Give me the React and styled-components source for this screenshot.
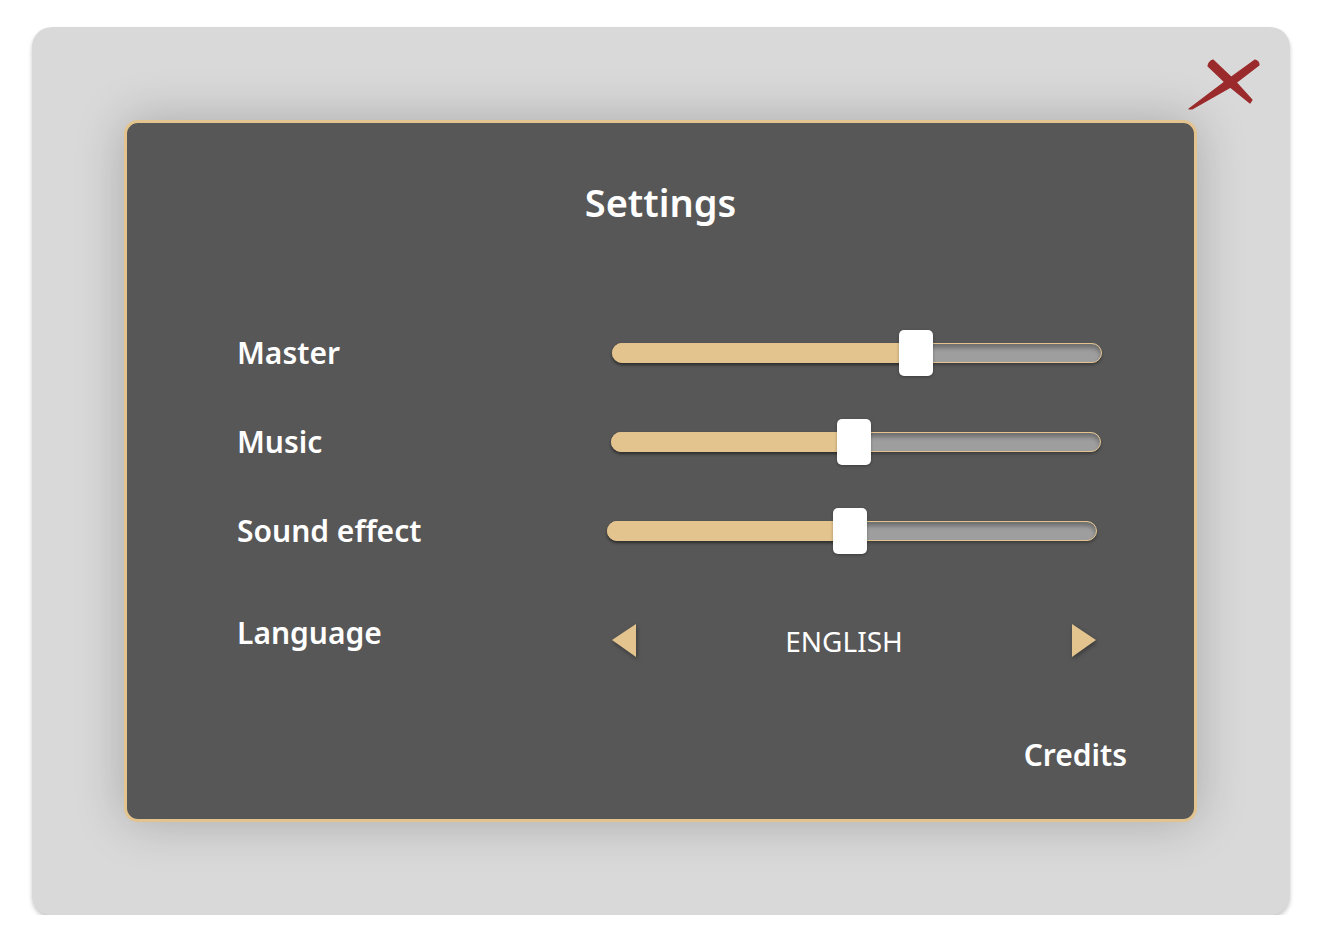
import React, { useState } from "react";
import styled, { createGlobalStyle } from "styled-components";

const Global = createGlobalStyle`
  body {
    margin: 0;
    background: #ffffff;
    font-family: "Noto Sans", "Open Sans", sans-serif;
  }
`;

const Frame = styled.div`
  position: relative;
  box-sizing: border-box;
  width: 1258px;
  height: 888px;
  margin: 27px auto 0;
  background: #d9d9d9;
  border-radius: 20px;
  box-shadow: 0 3px 4px rgba(0, 0, 0, 0.22);
  display: flex;
  align-items: center;
  justify-content: center;
`;

const Close = styled.button`
  position: absolute;
  top: 30px;
  right: 28px;
  width: 76px;
  height: 56px;
  padding: 0;
  border: none;
  background: none;
  cursor: pointer;
  svg {
    display: block;
  }
`;

const Panel = styled.div`
  box-sizing: border-box;
  width: 1073px;
  height: 702px;
  padding: 56px 67px 0;
  background: #575757;
  border: 3px solid #e3c48e;
  border-radius: 14px;
  box-shadow: 0 0 50px rgba(0, 0, 0, 0.22);
  display: flex;
  flex-direction: column;
  color: #ffffff;
`;

const Title = styled.h1`
  margin: 0;
  font-size: 38px;
  line-height: 46px;
  font-weight: 600;
  text-align: center;
`;

const Rows = styled.div`
  margin-top: 81px;
  display: flex;
  flex-direction: column;
`;

const Row = styled.div`
  display: grid;
  grid-template-columns: 370px 1fr;
  align-items: center;
  height: 89px;
  padding-left: 43px;
  margin-top: ${(p) => p.$gap || 0}px;
`;

const Label = styled.div`
  margin-top: 4px;
  font-size: 30px;
  font-weight: 600;
  line-height: 42px;
`;

const SliderBox = styled.div`
  position: relative;
  width: 490px;
  height: 20px;
  margin-top: 4px;
  margin-left: ${(p) => p.$shift}px;
  cursor: pointer;
`;

const Track = styled.div`
  box-sizing: border-box;
  height: 100%;
  border: 1px solid #e3c48e;
  border-radius: 10px;
  background: #9e9e9e;
  box-shadow: inset 0 4px 4px rgba(0, 0, 0, 0.3), 0 2px 3px rgba(0, 0, 0, 0.3);
`;

const Fill = styled.div`
  position: absolute;
  left: 0;
  top: 0;
  bottom: 0;
  background: #e3c48e;
  border-radius: 10px 0 0 10px;
  box-shadow: 0 2px 3px rgba(0, 0, 0, 0.25);
`;

const Thumb = styled.div`
  position: absolute;
  top: -13px;
  width: 34px;
  height: 46px;
  margin-left: -17px;
  background: #ffffff;
  border-radius: 5px;
  box-shadow: 0 1px 3px rgba(0, 0, 0, 0.3);
`;

const Selector = styled.div`
  display: flex;
  align-items: center;
  width: 486px;
  margin-left: 4px;
  padding-top: 20px;
`;

const Arrow = styled.button`
  width: 26px;
  height: 36px;
  padding: 0;
  border: none;
  background: none;
  cursor: pointer;
  svg {
    display: block;
    filter: drop-shadow(1px 2px 2px rgba(0, 0, 0, 0.35));
  }
`;

const Value = styled.div`
  flex: 1;
  padding-right: 20px;
  text-align: center;
  font-size: 28px;
  font-weight: 400;
  line-height: 40px;
`;

const Credits = styled.div`
  align-self: flex-end;
  margin-top: 59px;
  font-size: 30px;
  font-weight: 600;
  line-height: 42px;
`;

function Slider({ value, shift }) {
  return (
    <SliderBox $shift={shift}>
      <Track />
      <Fill style={{ width: `${value}%` }} />
      <Thumb style={{ left: `${value}%` }} />
    </SliderBox>
  );
}

const languages = ["ENGLISH", "FRANÇAIS", "DEUTSCH", "ESPAÑOL"];

export default function App() {
  const [lang, setLang] = useState(0);
  const step = (d) => setLang((l) => (l + d + languages.length) % languages.length);

  return (
    <>
      <Global />
      <Frame>
        <Close aria-label="Close">
          <svg width="76" height="56" viewBox="0 0 76 56">
            <g fill="#9a2a2b" stroke="#9a2a2b" strokeWidth="1.2" strokeLinejoin="round">
              <path d="M3 52 L40 24 L69 3 Q73 4 73 8 L43 31 L6 52 Z" />
              <path d="M27 3 L47 22 L66 43 L64 46 L43 29 L22 9 Q23 4 27 3 Z" />
            </g>
          </svg>
        </Close>
        <Panel>
          <Title>Settings</Title>
          <Rows>
            <Row>
              <Label>Master</Label>
              <Slider value={62} shift={5} />
            </Row>
            <Row>
              <Label>Music</Label>
              <Slider value={49.6} shift={4} />
            </Row>
            <Row>
              <Label>Sound effect</Label>
              <Slider value={49.6} shift={0} />
            </Row>
            <Row $gap={13}>
              <Label>Language</Label>
              <Selector>
                <Arrow aria-label="Previous" onClick={() => step(-1)}>
                  <svg width="26" height="36" viewBox="0 0 26 36">
                    <polygon points="25,1 1,17 25,34" fill="#e3c48e" />
                  </svg>
                </Arrow>
                <Value>{languages[lang]}</Value>
                <Arrow aria-label="Next" onClick={() => step(1)}>
                  <svg width="26" height="36" viewBox="0 0 26 36">
                    <polygon points="1,1 25,17 1,34" fill="#e3c48e" />
                  </svg>
                </Arrow>
              </Selector>
            </Row>
          </Rows>
          <Credits>Credits</Credits>
        </Panel>
      </Frame>
    </>
  );
}
